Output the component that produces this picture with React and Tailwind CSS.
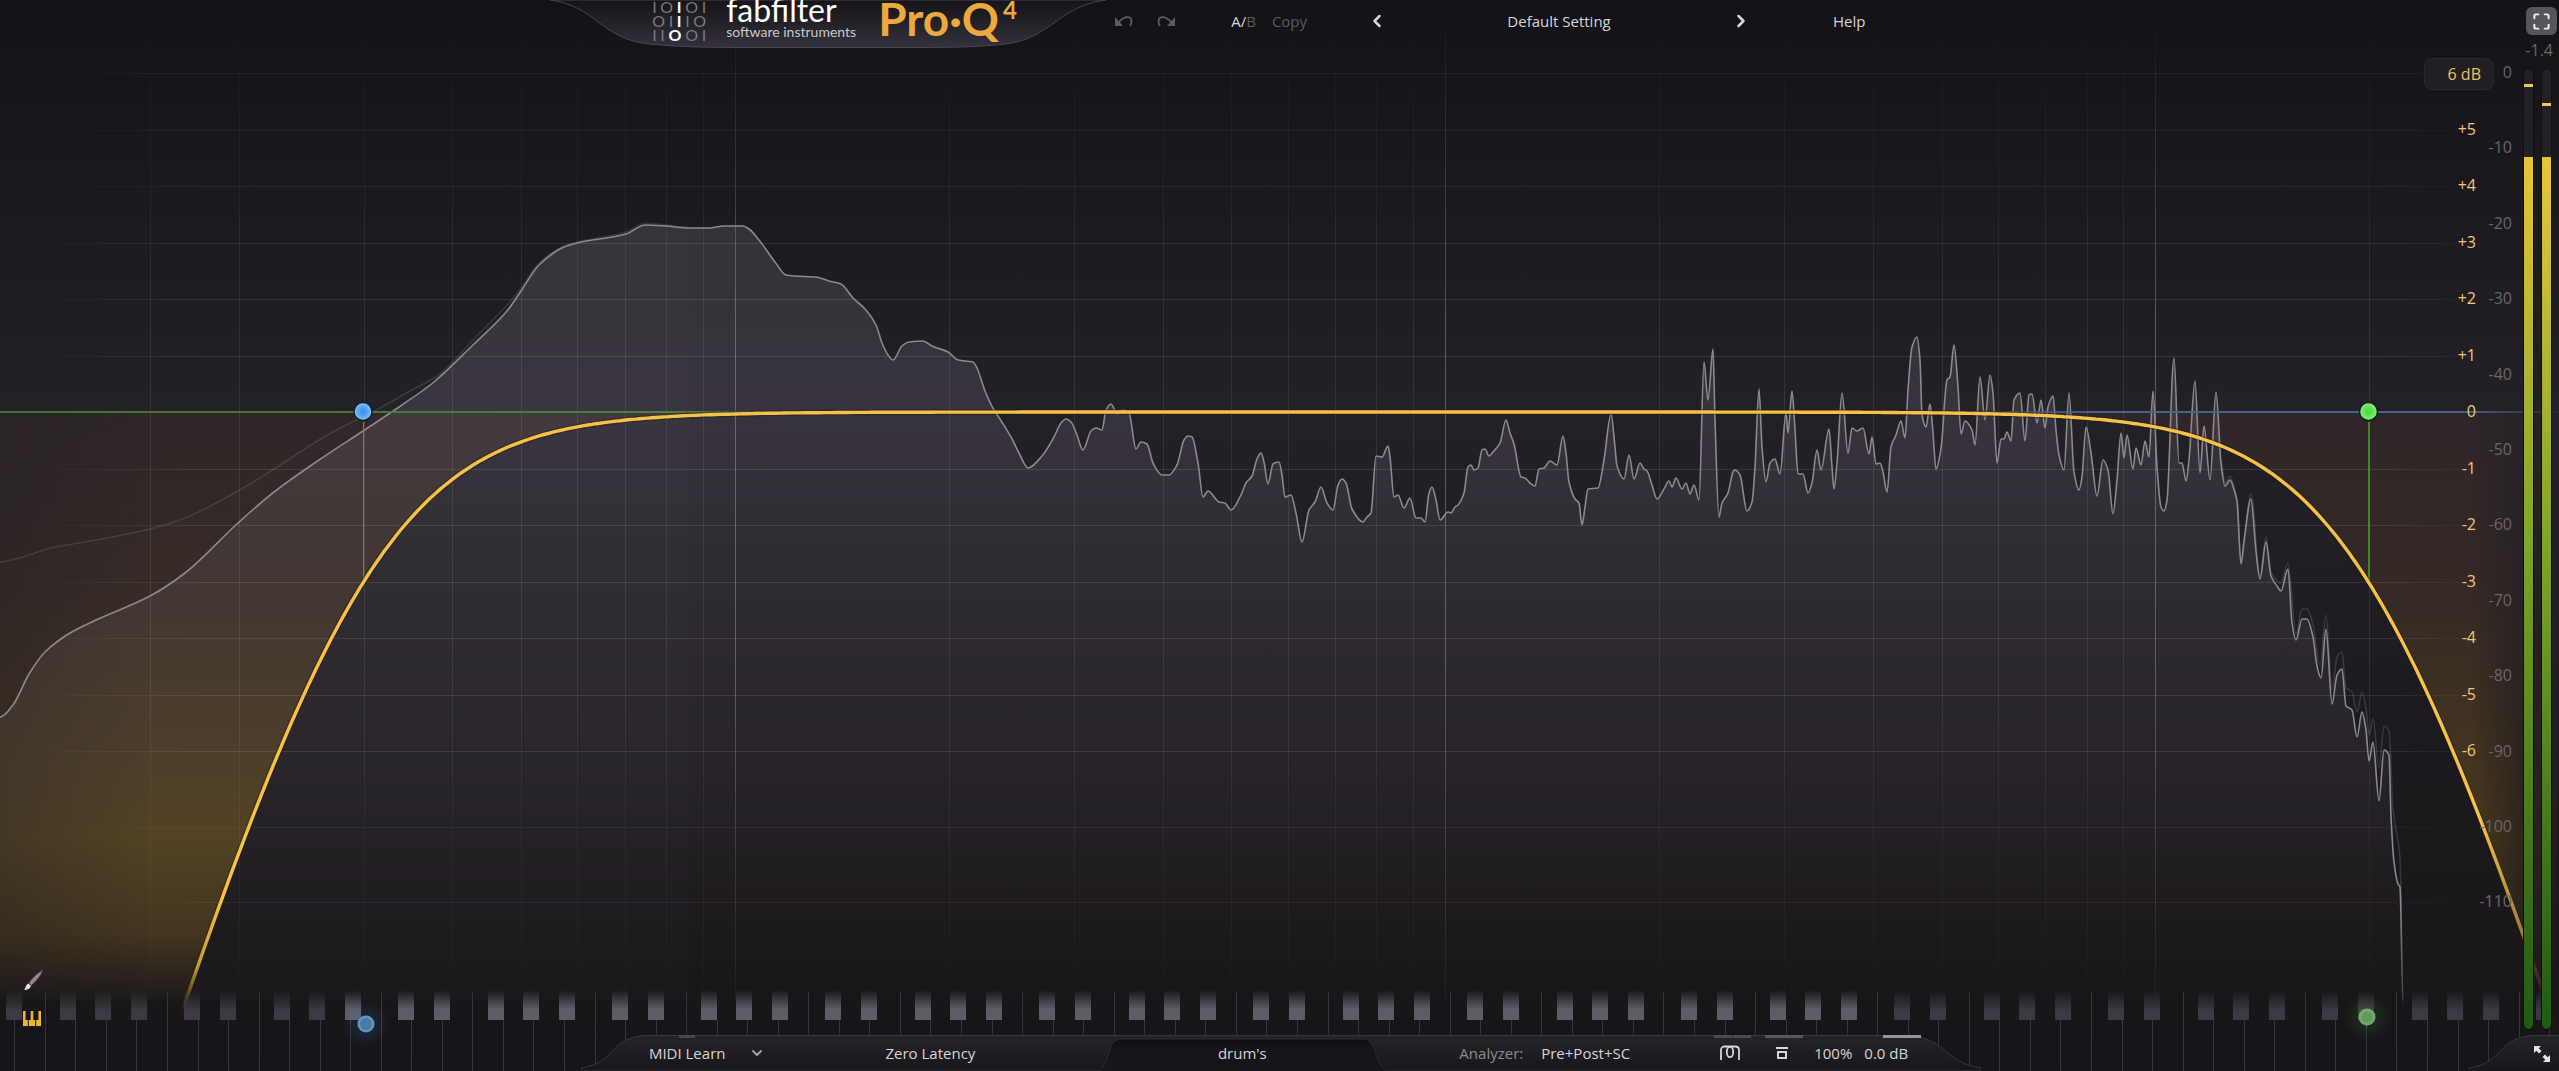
import { ChevronDown, ChevronLeft, ChevronRight, Maximize } from "lucide-react";

const W = 2559;
const H = 1071;
const ZERO_Y = 412;
const DB_STEP = 56.5;
const DECADE = 710.2;
const X_100HZ = 735;
const LOW_CUT_X = 363.5;
const HIGH_CUT_X = 2368.5;

const postSpectrum = [
  0, 717, 13, 705, 29, 674, 45, 652, 70, 633, 96, 620, 150, 596, 185, 573, 238, 523, 274, 492, 319, 460, 363, 431,
  402, 405, 434, 382, 472, 346, 507, 311, 521, 291, 539, 265, 564, 247, 577, 243, 626, 234, 645, 225, 666, 226,
  689, 228, 709, 228, 724, 226, 743, 226, 749, 229, 762, 244, 775, 262, 786, 275, 794, 276, 816, 277, 829, 281,
  841, 284, 853, 298, 866, 310, 876, 325, 882, 343, 888, 355, 893, 360, 902, 346, 909, 342, 923, 341, 932, 346,
  948, 352, 958, 360, 973, 362, 977, 368, 985, 391, 994, 410, 1000, 419, 1011, 437, 1020, 455, 1028, 468,
  1042, 456, 1054, 437, 1061, 423, 1066, 419, 1071, 422, 1077, 435, 1083, 450, 1091, 431, 1096, 428, 1102, 430,
  1106, 410, 1111, 404, 1117, 414, 1123, 410, 1129, 413, 1136, 449, 1141, 442, 1147, 444, 1153, 463, 1162, 475,
  1169, 475, 1177, 465, 1184, 440, 1188, 436, 1192, 437, 1198, 463, 1203, 497, 1208, 491, 1219, 502, 1225, 503,
  1231, 510, 1241, 495, 1246, 483, 1252, 476, 1257, 459, 1261, 453, 1264, 462, 1268, 484, 1273, 464, 1279, 462,
  1282, 475, 1285, 497, 1291, 495, 1296, 513, 1302, 542, 1309, 510, 1315, 502, 1321, 487, 1327, 503, 1333, 510,
  1338, 485, 1342, 479, 1346, 483, 1352, 509, 1363, 522, 1367, 517, 1371, 513, 1376, 456, 1382, 457, 1388, 446,
  1390, 457, 1394, 497, 1398, 495, 1404, 508, 1410, 498, 1416, 518, 1421, 518, 1425, 522, 1429, 493, 1432, 487,
  1436, 500, 1440, 520, 1448, 512, 1451, 513, 1455, 507, 1458, 505, 1464, 493, 1468, 467, 1471, 465, 1474, 470,
  1478, 468, 1482, 450, 1485, 449, 1489, 456, 1493, 452, 1500, 443, 1506, 420, 1510, 433, 1514, 444, 1521, 477,
  1525, 478, 1530, 483, 1535, 486, 1539, 469, 1544, 468, 1550, 461, 1557, 465, 1563, 436, 1566, 453, 1569, 482,
  1575, 499, 1579, 503, 1582, 525, 1585, 507, 1588, 489, 1598, 488, 1604, 460, 1611, 414, 1615, 447, 1617, 466,
  1624, 479, 1629, 455, 1634, 479, 1640, 463, 1644, 469, 1647, 471, 1652, 485, 1657, 499, 1664, 489, 1669, 481,
  1672, 487, 1676, 478, 1682, 489, 1686, 483, 1690, 494, 1694, 485, 1699, 500, 1704, 362, 1708, 400, 1713, 349,
  1715, 420, 1719, 517, 1722, 503, 1728, 493, 1733, 472, 1735, 470, 1740, 475, 1747, 511, 1752, 502, 1755, 467,
  1759, 389, 1762, 447, 1766, 482, 1770, 463, 1775, 459, 1780, 474, 1786, 413, 1788, 433, 1792, 391, 1795, 430,
  1798, 474, 1803, 474, 1808, 493, 1812, 483, 1817, 450, 1821, 470, 1829, 429, 1832, 467, 1834, 489, 1837, 463,
  1842, 393, 1848, 453, 1852, 428, 1857, 431, 1863, 428, 1869, 454, 1872, 437, 1876, 464, 1880, 463, 1883, 472,
  1887, 492, 1891, 447, 1896, 435, 1901, 421, 1905, 438, 1908, 390, 1912, 347, 1917, 337, 1920, 360, 1922, 415,
  1926, 427, 1930, 404, 1933, 433, 1936, 469, 1941, 448, 1947, 380, 1950, 377, 1954, 345, 1958, 387, 1961, 434,
  1965, 421, 1972, 430, 1975, 445, 1980, 377, 1985, 420, 1990, 375, 1993, 393, 1997, 463, 2001, 439, 2004, 439,
  2007, 432, 2011, 441, 2014, 400, 2020, 393, 2025, 441, 2029, 395, 2032, 394, 2037, 423, 2041, 400, 2045, 428,
  2048, 407, 2053, 396, 2056, 430, 2059, 455, 2064, 470, 2069, 393, 2074, 472, 2079, 490, 2082, 477, 2086, 427,
  2091, 453, 2097, 496, 2103, 460, 2108, 470, 2113, 514, 2117, 480, 2121, 433, 2124, 458, 2127, 435, 2133, 469,
  2136, 448, 2141, 465, 2145, 441, 2149, 457, 2153, 391, 2157, 467, 2161, 507, 2164, 511, 2167, 500, 2174, 358,
  2179, 463, 2182, 463, 2186, 481, 2189, 460, 2195, 381, 2200, 473, 2204, 426, 2210, 480, 2216, 392, 2221, 463,
  2225, 486, 2230, 480, 2235, 493, 2237, 501, 2241, 564, 2244, 541, 2251, 499, 2256, 551, 2260, 579, 2266, 542,
  2271, 576, 2277, 586, 2281, 591, 2288, 569, 2292, 623, 2296, 640, 2302, 619, 2307, 619, 2313, 637, 2317, 666,
  2321, 678, 2326, 629, 2332, 704, 2337, 675, 2342, 669, 2346, 706, 2352, 710, 2357, 737, 2362, 712, 2366, 730,
  2369, 761, 2373, 742, 2379, 801, 2384, 750, 2389, 755, 2391, 816, 2394, 862, 2398, 884, 2400, 887, 2403, 1005,
];

const preLow = [
  0, 562, 19, 558, 51, 548, 96, 540, 150, 529, 185, 518, 238, 491, 274, 469, 319, 440, 348, 424, 367, 415, 408, 392,
  440, 374, 472, 341, 507, 305, 521, 288, 539, 263, 564, 246, 577, 242, 626, 232, 645, 223, 666, 225, 689, 227,
];

const preHigh = [
  2221, 461, 2225, 483, 2230, 476, 2235, 490, 2237, 499, 2241, 560, 2251, 494, 2260, 577, 2266, 537, 2271, 572,
  2281, 583, 2288, 563, 2296, 634, 2302, 609, 2307, 609, 2313, 625, 2320, 666, 2326, 615, 2332, 690, 2337, 657,
  2342, 652, 2346, 688, 2352, 692, 2357, 712, 2362, 692, 2366, 708, 2369, 735, 2373, 719, 2379, 768, 2384, 726,
  2389, 731, 2393, 810, 2400, 858, 2403, 1000,
];

// monotone cubic path through a flat [x, y, x, y...] list
function smoothPath(data) {
  const pts = [];
  for (let i = 0; i < data.length; i += 2) pts.push([data[i], data[i + 1]]);
  const slope = (a, b) => (b[1] - a[1]) / (b[0] - a[0]);
  const m = pts.map((p, i) => {
    if (i === 0 || i === pts.length - 1) return 0;
    const s0 = slope(pts[i - 1], p);
    const s1 = slope(p, pts[i + 1]);
    return s0 * s1 <= 0 ? 0 : (2 * s0 * s1) / (s0 + s1);
  });
  let d = `M${pts[0][0]},${pts[0][1]}`;
  for (let i = 1; i < pts.length; i++) {
    const [x0, y0] = pts[i - 1];
    const [x1, y1] = pts[i];
    const h = (x1 - x0) / 3;
    d += `C${x0 + h},${y0 + m[i - 1] * h} ${x1 - h},${y1 - m[i] * h} ${x1},${y1}`;
  }
  return d;
}

// 12 dB/oct low cut and high cut
function gainAt(x) {
  const low = Math.pow(10, (4 * (LOW_CUT_X - x)) / DECADE);
  const high = Math.pow(10, (4 * (x - HIGH_CUT_X)) / DECADE);
  return 10 * Math.log10(1 + low) + 10 * Math.log10(1 + high);
}

function curvePath(from, to) {
  const pts = [];
  for (let x = from; x <= to; x += 4) {
    pts.push(`${x},${(ZERO_Y + gainAt(x) * DB_STEP).toFixed(1)}`);
  }
  return pts.join("L");
}

const postPath = smoothPath(postSpectrum);
const preLowPath = smoothPath(preLow);
const preHighPath = smoothPath(preHigh);

const freqLines = [15, 20, 30, 40, 50, 60, 70, 80, 90, 100]
  .concat([200, 300, 400, 500, 600, 700, 800, 900, 1000])
  .concat([2000, 3000, 4000, 5000, 6000, 7000, 8000, 9000, 10000, 20000])
  .map((f) => ({ x: X_100HZ + DECADE * Math.log10(f / 100), major: [100, 1000, 10000].includes(f) }));

const dbLines = [73, 130, 186, 243, 299, 356, 469, 525, 582, 638, 695, 751, 827, 902];

const OCTAVE = 213.8;
const blackKeys = [];
for (let o = -1; o < 12; o++) {
  [68, 103, 139, 192, 228].forEach((c) => blackKeys.push(Math.round(c + o * OCTAVE) - 8));
}
const whiteKeys = Array.from({ length: 84 }, (_, n) => ({
  x: Math.round(14.3 + n * 30.54) + 0.5,
  full: n % 7 === 1 || n % 7 === 5,
}));

const gainLabels = ["+5", "+4", "+3", "+2", "+1", "0", "-1", "-2", "-3", "-4", "-5", "-6"];
const levelLabels = ["0", "-10", "-20", "-30", "-40", "-50", "-60", "-70", "-80", "-90", "-100", "-110"];

function Display() {
  return (
    <svg
      className="col-start-1 row-start-1 h-full w-full"
      viewBox={`0 0 ${W} ${H}`}
      preserveAspectRatio="none"
      role="img"
      aria-label="EQ curve and spectrum"
    >
      <defs>
        <linearGradient id="bg" x1="0" y1="0" x2="0" y2="1">
          <stop offset="0" stopColor="#131216" />
          <stop offset="0.2" stopColor="#1c1a1f" />
          <stop offset="0.38" stopColor="#232027" />
          <stop offset="0.55" stopColor="#201d23" />
          <stop offset="0.75" stopColor="#1c191d" />
          <stop offset="0.93" stopColor="#191619" />
          <stop offset="1" stopColor="#151418" />
        </linearGradient>
        <linearGradient id="spectrum" gradientUnits="userSpaceOnUse" x1="0" y1="220" x2="0" y2="1000">
          <stop offset="0" stopColor="#d8d0dc" stopOpacity="0.13" />
          <stop offset="0.28" stopColor="#d8c8e8" stopOpacity="0.11" />
          <stop offset="0.42" stopColor="#d8d0dc" stopOpacity="0.08" />
          <stop offset="0.7" stopColor="#d8d0dc" stopOpacity="0.055" />
          <stop offset="0.9" stopColor="#d8d0dc" stopOpacity="0.015" />
          <stop offset="1" stopColor="#d8d0dc" stopOpacity="0" />
        </linearGradient>
        <linearGradient id="cut" gradientUnits="userSpaceOnUse" x1="0" y1="412" x2="0" y2="1005">
          <stop offset="0" stopColor="#c87a40" stopOpacity="0.07" />
          <stop offset="0.3" stopColor="#d08a35" stopOpacity="0.12" />
          <stop offset="0.72" stopColor="#e0a820" stopOpacity="0.25" />
          <stop offset="0.88" stopColor="#e0a820" stopOpacity="0.19" />
          <stop offset="1" stopColor="#e0a820" stopOpacity="0" />
        </linearGradient>
        <linearGradient id="sides" gradientUnits="userSpaceOnUse" x1="0" y1="0" x2={W} y2="0">
          <stop offset="0" stopColor="#aaa" />
          <stop offset="0.06" stopColor="#fff" />
          <stop offset="0.965" stopColor="#fff" />
          <stop offset="0.985" stopColor="#666" />
          <stop offset="1" stopColor="#222" />
        </linearGradient>
        <mask id="sideMask">
          <rect width={W} height={H} fill="url(#sides)" />
        </mask>
        <linearGradient id="gridX" gradientUnits="userSpaceOnUse" x1="0" y1="0" x2={W} y2="0">
          <stop offset="0.005" stopColor="#fff" stopOpacity="0" />
          <stop offset="0.08" stopColor="#fff" />
          <stop offset="0.93" stopColor="#fff" />
          <stop offset="0.975" stopColor="#fff" stopOpacity="0" />
        </linearGradient>
        <linearGradient id="gridY" gradientUnits="userSpaceOnUse" x1="0" y1="30" x2="0" y2="1000">
          <stop offset="0" stopColor="#fff" stopOpacity="0.1" />
          <stop offset="0.3" stopColor="#fff" stopOpacity="1" />
          <stop offset="0.65" stopColor="#fff" stopOpacity="1" />
          <stop offset="1" stopColor="#fff" stopOpacity="0.15" />
        </linearGradient>
        <mask id="gridMaskX">
          <rect width={W} height={H} fill="url(#gridX)" />
        </mask>
        <mask id="gridMaskY">
          <rect y="30" width={W} height="970" fill="url(#gridY)" />
        </mask>
        <linearGradient id="curve" gradientUnits="userSpaceOnUse" x1="0" y1="900" x2="0" y2="1010">
          <stop offset="0" stopColor="#f6c14a" />
          <stop offset="0.6" stopColor="#c49a34" />
          <stop offset="1" stopColor="#c49a34" stopOpacity="0" />
        </linearGradient>
        <linearGradient id="curveRight" gradientUnits="userSpaceOnUse" x1="2480" y1="0" x2="2550" y2="0">
          <stop offset="0" stopColor="#f6c14a" />
          <stop offset="0.6" stopColor="#a07f3c" />
          <stop offset="0.7" stopColor="#5a3c28" />
          <stop offset="1" stopColor="#5a3c28" stopOpacity="0" />
        </linearGradient>
        <linearGradient id="line" gradientUnits="userSpaceOnUse" x1="0" y1="900" x2="0" y2="1005">
          <stop offset="0" stopColor="#8b888e" />
          <stop offset="1" stopColor="#8b888e" stopOpacity="0.1" />
        </linearGradient>
        <linearGradient id="greenLine" gradientUnits="userSpaceOnUse" x1="0" y1="0" x2="900" y2="0">
          <stop offset="0" stopColor="#3f7036" />
          <stop offset="0.75" stopColor="#4c7f44" />
          <stop offset="1" stopColor="#4c7f44" stopOpacity="0" />
        </linearGradient>
        <linearGradient id="blueLine" gradientUnits="userSpaceOnUse" x1="1900" y1="0" x2={W} y2="0">
          <stop offset="0" stopColor="#43648c" stopOpacity="0" />
          <stop offset="0.3" stopColor="#43648c" />
          <stop offset="0.85" stopColor="#43648c" />
          <stop offset="1" stopColor="#43648c" stopOpacity="0.1" />
        </linearGradient>
        <linearGradient id="keyLit" x1="0" y1="0" x2="0" y2="1">
          <stop offset="0" stopColor="#5f5c66" stopOpacity="0" />
          <stop offset="0.65" stopColor="#5f5c66" />
          <stop offset="1" stopColor="#5f5c66" />
        </linearGradient>
        <linearGradient id="keyDim" x1="0" y1="0" x2="0" y2="1">
          <stop offset="0" stopColor="#3d3a44" stopOpacity="0" />
          <stop offset="0.7" stopColor="#3d3a44" />
          <stop offset="1" stopColor="#3d3a44" />
        </linearGradient>
        <radialGradient id="blueNode">
          <stop offset="0.2" stopColor="#3a96ec" />
          <stop offset="0.75" stopColor="#6cb4f2" />
          <stop offset="1" stopColor="#a8d4f8" />
        </radialGradient>
        <radialGradient id="greenNode">
          <stop offset="0.2" stopColor="#4ade3c" />
          <stop offset="0.75" stopColor="#74ea6a" />
          <stop offset="1" stopColor="#a6f2a0" />
        </radialGradient>
        <radialGradient id="blueGlow">
          <stop offset="0.3" stopColor="#3a96ec" stopOpacity="0.14" />
          <stop offset="1" stopColor="#3a96ec" stopOpacity="0" />
        </radialGradient>
        <radialGradient id="greenGlow">
          <stop offset="0.3" stopColor="#4ade3c" stopOpacity="0.12" />
          <stop offset="1" stopColor="#4ade3c" stopOpacity="0" />
        </radialGradient>
      </defs>

      <rect width={W} height={H} fill="url(#bg)" />

      <path d={`${preLowPath}L689,1000L0,1000Z`} fill="#fff" fillOpacity="0.012" />
      <path d={`${postPath}L0,1005Z`} fill="url(#spectrum)" />

      <g mask="url(#sideMask)">
        <path d={`M0,412L${curvePath(160, 1200)}L1200,412L0,412L0,1010L160,1010Z`} fill="url(#cut)" />
        <path d={`M1600,412L${curvePath(1600, 2556)}L2559,412Z`} fill="url(#cut)" />
      </g>

      <g mask="url(#gridMaskX)" fill="#fff" fillOpacity="0.09">
        {dbLines.map((y) => (
          <rect key={y} y={y} width={W} height="1" fillOpacity={y > 751 ? 0.05 : y < 240 ? 0.06 : 0.1} />
        ))}
      </g>
      <g mask="url(#gridMaskY)" fill="#fff">
        {freqLines.map(({ x, major }) => (
          <rect key={x} x={Math.round(x)} y="30" width="1" height="970" fillOpacity={major ? 0.26 : 0.085} />
        ))}
      </g>

      <g fill="none">
        <path d={preLowPath} stroke="#fff" strokeOpacity="0.11" strokeWidth="1.6" />
        <path d={preHighPath} stroke="#fff" strokeOpacity="0.13" strokeWidth="1.6" />
        <path d={postPath} stroke="url(#line)" strokeWidth="1.6" />
      </g>

      <rect y="411" width="900" height="2" fill="url(#greenLine)" />
      <rect x="1900" y="411" width="659" height="2" fill="url(#blueLine)" />
      <rect x="363" y="422" width="1" height="160" fill="#4585b8" />
      <rect x="2368" y="422" width="2" height="160" fill="#45852c" />

      <g fill="none" strokeLinejoin="round">
        <path d={`M${curvePath(180, 2556)}`} stroke="#2a1c08" strokeOpacity="0.4" strokeWidth="6" />
        <path d={`M${curvePath(180, 1280)}`} stroke="url(#curve)" strokeWidth="3.4" />
        <path d={`M${curvePath(1280, 2556)}`} stroke="url(#curveRight)" strokeWidth="3.4" />
      </g>

      {whiteKeys.map(({ x, full }) => (
        <line key={x} x1={x} x2={x} y1={full ? 992 : 1020} y2={H} stroke="#37353c" strokeWidth="1" />
      ))}
      {blackKeys.map((x) => (
        <rect
          key={x}
          x={x}
          y="990"
          width="16"
          height="30"
          fill={x > 340 && x < 1870 ? "url(#keyLit)" : "url(#keyDim)"}
        />
      ))}
      <circle cx="366" cy="1024" r="24" fill="url(#blueGlow)" />
      <circle cx="366" cy="1024" r="8.5" fill="#6496bd" />
      <circle cx="366" cy="1024" r="6" fill="#4a7ba6" />
      <circle cx="2367" cy="1017" r="24" fill="url(#greenGlow)" />
      <circle cx="2367" cy="1017" r="8.5" fill="#74a870" />
      <circle cx="2367" cy="1017" r="5.5" fill="#5b9e54" />

      <circle cx="363" cy="411.5" r="9" fill="url(#blueNode)" stroke="#14222f" strokeWidth="1.5" />
      <circle cx="2368.5" cy="411.5" r="9" fill="url(#greenNode)" stroke="#12240f" strokeWidth="1.5" />
    </svg>
  );
}

function Logo() {
  const rows = [
    ["I", "O", "I", "O", "I"],
    ["O", "I", "I", "I", "O"],
    ["I", "I", "O", "O", "I"],
  ];
  return (
    <div className="relative h-12 w-[556px] shrink-0">
      <svg className="absolute inset-0 h-full w-full" viewBox="0 0 556 48" preserveAspectRatio="none" aria-hidden="true">
        <defs>
          <linearGradient id="plate" x1="0" y1="0" x2="0" y2="1">
            <stop offset="0" stopColor="#151418" />
            <stop offset="1" stopColor="#33313a" />
          </linearGradient>
        </defs>
        <path
          d="M0,0C46,6 50,38 98,44C130,47 160,47.500 190,47.500H370C400,47.500 430,47 456,44C502,38 508,6 556,0Z"
          fill="url(#plate)"
          stroke="#47454d"
          strokeWidth="1"
        />
      </svg>
      <div className="relative flex h-12 items-end pl-[102px] font-['Lato',sans-serif]">
        <div className="mb-1.5 flex w-[54px] flex-col text-base/[14px] text-[#7a7880]" aria-hidden="true">
          {rows.map((row, r) => (
            <div key={r} className="flex justify-between">
              {row.map((c, i) => (
                <span key={i} className={i === 2 ? "font-bold text-white" : ""}>
                  {c}
                </span>
              ))}
            </div>
          ))}
        </div>
        <div className="mb-2 ml-5 flex w-[132px] flex-col">
          <span className="text-[32px]/7 text-white">fabfilter</span>
          <span className="text-sm/4 text-[#c9c8cc]">software instruments</span>
        </div>
        <div className="mb-1.5 ml-5 flex items-start gap-1 font-bold text-[#eba93f]">
          <span className="text-[46px]/[46px]">Pro·Q</span>
          <span className="text-2xl/7">4</span>
        </div>
      </div>
    </div>
  );
}

function TopBar() {
  return (
    <header className="flex items-start">
      <div className="w-[21.5%] shrink-0" />
      <Logo />
      <div className="flex h-[42px] flex-1 items-center text-[15px] text-[#d6d5d8]">
        <button type="button" aria-label="Undo" className="ml-2 text-[#5d5b61]">
          <svg width="20" height="14" viewBox="0 0 20 14" fill="none" stroke="currentColor" strokeWidth="1.8">
            <path d="M4.500 9C9 2 17.500 1 17.500 7c0 2-.5 3.500-1.500 5" />
            <path d="M1 3v9h8z" fill="currentColor" stroke="none" />
          </svg>
        </button>
        <button type="button" aria-label="Redo" className="ml-[22px] text-[#5d5b61]">
          <svg width="20" height="14" viewBox="0 0 20 14" fill="none" stroke="currentColor" strokeWidth="1.8">
            <path d="M15.500 9C11 2 2.500 1 2.500 7c0 2 .5 3.500 1.500 5" />
            <path d="M19 3v9h-8z" fill="currentColor" stroke="none" />
          </svg>
        </button>
        <button type="button" className="ml-[55px]">
          A/<span className="text-[#5d5b61]">B</span>
        </button>
        <button type="button" className="ml-4 text-[#5d5b61]">
          Copy
        </button>
        <button type="button" aria-label="Previous preset" className="ml-[60px]">
          <ChevronLeft size={20} strokeWidth={3} />
        </button>
        <button type="button" className="w-[344px] text-center">
          Default Setting
        </button>
        <button type="button" aria-label="Next preset">
          <ChevronRight size={20} strokeWidth={3} />
        </button>
        <button type="button" className="ml-[82px]">
          Help
        </button>
      </div>
    </header>
  );
}

function BottomBar() {
  return (
    <footer className="flex items-end">
      <div className="w-[22.7%] shrink-0" />
      <div className="relative h-9 w-[1400px] shrink-0">
        <svg
          className="absolute inset-0 h-full w-full"
          viewBox="0 0 1400 36"
          preserveAspectRatio="none"
          aria-hidden="true"
        >
          <defs>
            <linearGradient id="dock" x1="0" y1="0" x2="0" y2="1">
              <stop offset="0" stopColor="#26242a" />
              <stop offset="1" stopColor="#17161a" />
            </linearGradient>
            <linearGradient id="slot" x1="0" y1="0" x2="0" y2="1">
              <stop offset="0" stopColor="#0f0e12" />
              <stop offset="0.3" stopColor="#151418" />
              <stop offset="1" stopColor="#17161a" />
            </linearGradient>
          </defs>
          <path
            d="M0,33C36,28 28,.5 68,.5H1322C1366,.5 1362,28 1400,33V36H0Z"
            fill="url(#dock)"
            stroke="#38363e"
            strokeWidth="1"
          />
          <path d="M518,37C530,26 526,4 540,4H782C796,4 792,26 806,37Z" fill="url(#slot)" stroke="#2d2b33" />
          <rect x="98" y="0" width="16" height="3" fill="#4a4752" />
          <rect x="1133" y="0" width="18" height="3" fill="#4b4951" />
          <rect x="1152" y="0" width="18" height="3" fill="#4b4951" />
          <rect x="1184" y="0" width="38" height="3" fill="#5a585f" />
          <rect x="1302" y="0" width="38" height="3" fill="#96949b" />
        </svg>
        <div className="relative flex h-9 items-center text-[15px] whitespace-nowrap text-[#d6d5d8]">
          <button type="button" className="ml-[68px] flex items-center gap-6">
            MIDI Learn
            <ChevronDown size={16} strokeWidth={3} className="text-[#a09ea4]" />
          </button>
          <button type="button" className="ml-[120px]">
            Zero Latency
          </button>
          <button type="button" className="ml-[152px] w-[230px] text-center">
            drum&#39;s
          </button>
          <button type="button" className="ml-[102px] flex gap-[18px]">
            <span className="text-[#8d8b92]">Analyzer:</span>
            Pre+Post+SC
          </button>
          <button type="button" aria-label="Headphones" className="ml-[90px]">
            <svg width="20" height="16" viewBox="0 0 20 16" fill="none" stroke="currentColor" strokeWidth="1.8">
              <path d="M1 15V5c0-3 2-3.500 4-3.500h10c2 0 4 .5 4 3.500v10" />
              <ellipse cx="10" cy="7" rx="3.200" ry="5.200" />
            </svg>
          </button>
          <button type="button" aria-label="Gain scale" className="ml-9">
            <svg width="12" height="14" viewBox="0 0 12 14" fill="none" stroke="currentColor" strokeWidth="2">
              <path d="M0 2h12M2 6h8v6H2z" />
            </svg>
          </button>
          <button type="button" className="ml-[26px]">
            100%
          </button>
          <button type="button" className="ml-3">
            0.0 dB
          </button>
        </div>
      </div>
      <div className="relative ml-auto h-9 w-[90px] shrink-0">
        <svg className="absolute inset-0 h-full w-full" viewBox="0 0 90 36" preserveAspectRatio="none" aria-hidden="true">
          <path d="M0,33C36,28 28,.5 68,.5H92V38H0Z" fill="url(#dock)" stroke="#38363e" />
        </svg>
        <button type="button" aria-label="Resize" className="absolute right-2 bottom-2 text-[#e4e3e6]">
          <svg width="18" height="18" viewBox="0 0 18 18" fill="currentColor">
            <path d="M1 1h7L5.700 3.300 8.500 6 6 8.500 3.300 5.700 1 8z" />
            <path d="M17 17h-7l2.300-2.300L9.500 12 12 9.500l2.700 2.800L17 10z" />
          </svg>
        </button>
      </div>
    </footer>
  );
}

function Meter({ peak }) {
  return (
    <div className="relative flex h-full w-[9px] flex-col overflow-hidden rounded-md bg-[#222126] outline-1 outline-[#0e0d10]">
      <div className="h-[9.2%]" />
      <div className="flex-1 bg-linear-to-b from-[#e6c53a] via-[#7da528] via-45% to-[#1f5a14]" />
      <div className="absolute inset-x-0 h-[3px] bg-[#efc75a]" style={{ top: `${peak}%` }} />
    </div>
  );
}

function Scales() {
  return (
    <aside className="col-start-1 row-start-1 flex justify-end">
      <div className="flex h-full w-[70px] flex-col">
        <div className="h-[5.4%] shrink-0" />
        <button
          type="button"
          className="h-8 shrink-0 rounded-lg border border-[#2b292e] bg-[#211f23] pr-3 text-right text-[#f0c060]"
        >
          6 dB
        </button>
        <div className="h-[2.5%] shrink-0" />
        <ul className="flex h-[60.3%] flex-col justify-between pr-[18px] text-right text-[#f0c878]">
          {gainLabels.map((label) => (
            <li key={label} className="leading-6">
              {label}
            </li>
          ))}
        </ul>
      </div>
      <div className="flex h-full w-[18px] flex-col">
        <div className="h-[5.6%] shrink-0" />
        <ul className="flex h-[79.7%] flex-col items-end justify-between text-[#69666c]">
          {levelLabels.map((label) => (
            <li key={label} className="leading-6">
              {label}
            </li>
          ))}
        </ul>
      </div>
      <div className="flex h-full w-[47px] flex-col items-end pt-[7px]">
        <button
          type="button"
          aria-label="Full screen"
          className="mr-0.5 flex h-7 w-[31px] items-center justify-center rounded-md bg-[#57555c] text-[#f0eff2]"
        >
          <Maximize size={19} strokeWidth={2.5} />
        </button>
        <span className="mt-[3px] mr-1.5 leading-6 text-[#69666c]">-1.4</span>
        <div className="mt-[7px] mr-2 flex min-h-0 flex-1 gap-[9px]">
          <Meter peak={1.6} />
          <Meter peak={3.5} />
        </div>
        <div className="h-[42px] shrink-0" />
      </div>
    </aside>
  );
}

export default function App() {
  return (
    <main className="grid h-screen w-full grid-cols-1 grid-rows-1 overflow-hidden bg-[#17161a] font-['Open_Sans','Noto_Sans',sans-serif] text-base">
      <Display />
      <div className="col-start-1 row-start-1 flex min-w-0 flex-col">
        <TopBar />
        <div className="mt-auto mb-2 flex flex-col items-start gap-5 pl-[22px]">
          <button type="button" aria-label="Sketch">
            <svg width="22" height="22" viewBox="0 0 22 22">
              <path d="M21 1C15 4 9 10 7 14l2.500 2.500C14 12 19 7 21 1z" fill="#8f8b90" stroke="#5a2a60" />
              <path d="M6.500 14.500 9 17c-1 3-4 4-7 4 2-2 1.500-5.500 4.500-6.500z" fill="#e2dfe4" />
            </svg>
          </button>
          <button type="button" aria-label="Piano display">
            <svg width="20" height="16" viewBox="0 0 20 16" fill="#e8b838">
              <path d="M1 0h2.600v9h2.200v6H1zM8.700 0h2.600v9h1.900v6H6.800v-6h1.900zM16.400 0H19v15h-4.800v-6h2.200z" />
            </svg>
          </button>
        </div>
        <BottomBar />
      </div>
      <Scales />
    </main>
  );
}
